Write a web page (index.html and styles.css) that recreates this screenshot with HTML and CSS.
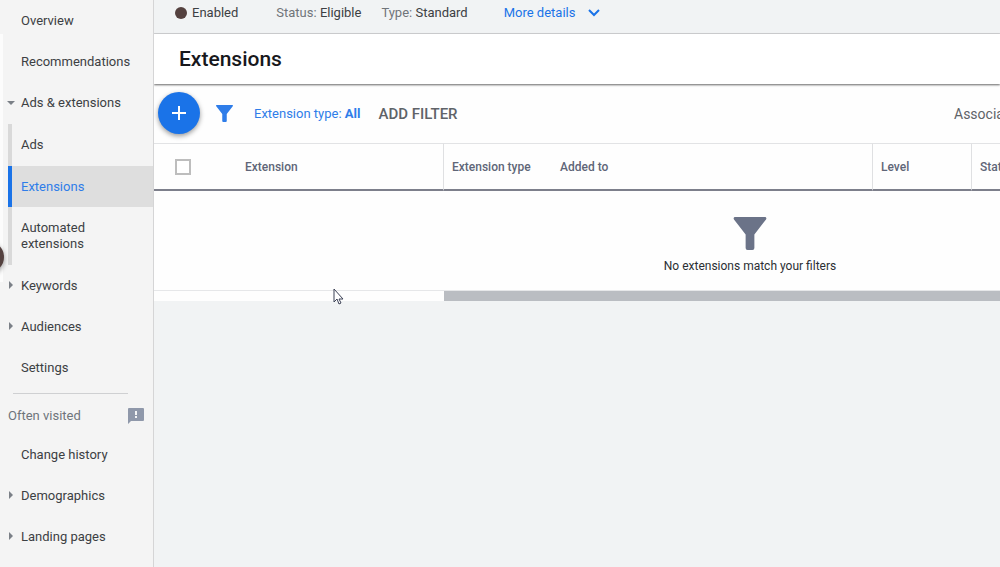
FILE: index.html
```html
<!DOCTYPE html>
<html lang="en">
<head>
<meta charset="utf-8">
<title>Extensions</title>
<link rel="stylesheet" href="styles.css">
</head>
<body>
<div class="app">
  <nav class="sidebar" aria-label="Campaign pages">
    <span class="rail"></span>
    <span class="rail-knob"></span>
    <a class="nav-item" href="#">Overview</a>
    <a class="nav-item" href="#">Recommendations</a>
    <a class="nav-item open" href="#">Ads &amp; extensions</a>
    <div class="subnav">
      <a class="nav-item" href="#">Ads</a>
      <a class="nav-item active" href="#" aria-current="page">Extensions</a>
      <a class="nav-item tall" href="#">Automated extensions</a>
    </div>
    <a class="nav-item closed" href="#">Keywords</a>
    <a class="nav-item closed" href="#">Audiences</a>
    <a class="nav-item" href="#">Settings</a>
    <hr class="divider">
    <div class="often">
      <span>Often visited</span>
      <svg class="feedback" viewBox="0 0 16 16" aria-hidden="true"><path fill="#8f98aa" d="M1 0h14q1 0 1 1v11q0 1-1 1H3l-3 3V1q0-1 1-1z"/><path fill="#f3f4f5" d="M7 3h2v4H7zM7 8h2v2H7z"/></svg>
    </div>
    <a class="nav-item" href="#">Change history</a>
    <a class="nav-item closed" href="#">Demographics</a>
    <a class="nav-item closed" href="#">Landing pages</a>
  </nav>
  <main class="main">
    <div class="status-bar">
      <span class="enabled"><span class="dot"></span>Enabled</span>
      <span class="status"><span class="muted">Status:</span> Eligible</span>
      <span class="type"><span class="muted">Type:</span> Standard</span>
      <button class="more" type="button">More details
        <svg class="chevron" viewBox="0 0 12 8" aria-hidden="true"><path d="M1 1l5 5 5-5" fill="none" stroke="#1a73e8" stroke-width="2"/></svg>
      </button>
    </div>
    <header class="heading"><h1>Extensions</h1></header>
    <div class="toolbar">
      <button class="fab" type="button" aria-label="Add extension">
        <svg viewBox="0 0 16 16" aria-hidden="true"><path d="M8 1v14M1 8h14" stroke="#fff" stroke-width="2"/></svg>
      </button>
      <svg class="funnel" viewBox="0 0 34 34" aria-hidden="true"><path fill="#2f7de9" d="M1 0h32q1.500 1 .5 2.500L21.500 18v14q0 2-2 2h-5q-2 0-2-2V18L.5 2.500Q-.5 1 1 0z"/></svg>
      <button class="chip" type="button">Extension type: <b>All</b></button>
      <button class="add-filter" type="button">ADD FILTER</button>
      <button class="association" type="button">Associa</button>
    </div>
    <div class="table-area">
      <table class="grid">
        <thead>
          <tr>
            <th class="col-check"><input type="checkbox" aria-label="Select all"></th>
            <th class="col-ext">Extension</th>
            <th class="col-type">Extension type</th>
            <th class="col-added">Added to</th>
            <th class="col-level">Level</th>
            <th class="col-status">Status</th>
          </tr>
        </thead>
        <tbody>
          <tr>
            <td colspan="6">
              <div class="empty">
                <svg class="funnel-large" viewBox="0 0 34 34" aria-hidden="true"><path fill="#6b7388" d="M1 0h32q1.500 1 .5 2.500L21.500 18v14q0 2-2 2h-5q-2 0-2-2V18L.5 2.500Q-.5 1 1 0z"/></svg>
                <span>No extensions match your filters</span>
              </div>
            </td>
          </tr>
        </tbody>
      </table>
      <div class="scroll-track"><div class="scroll-thumb"></div></div>
    </div>
  </main>
  <svg class="cursor" viewBox="0 0 11 17" aria-hidden="true"><path d="M1 1v13l3-3 2 5 2-1-2-4h4z" fill="#fff" stroke="#3d4256"/></svg>
</div>
</body>
</html>
```
FILE: styles.css
```css
* { box-sizing: border-box; }
body {
  margin: 0;
  background: #f1f3f4;
  color: #3c4043;
  font: 13px/16px Roboto, "Liberation Sans", sans-serif;
}
button { border: 0; padding: 0; background: none; font: inherit; color: inherit; white-space: nowrap; }
a { color: inherit; text-decoration: none; }
.app { position: relative; display: flex; height: 100vh; overflow: hidden; }

.sidebar {
  position: relative;
  flex: 0 0 154px;
  background: #f4f4f4;
  border-right: 1px solid #d5d5d6;
  overflow: hidden;
}
.rail { position: absolute; left: 0; top: 34px; width: 3px; height: 248px; background: #fcfcfc; }
.rail-knob {
  position: absolute; left: -28px; top: 241px; width: 32px; height: 32px;
  border-radius: 50%; background: #54413f; box-shadow: 0 2px 5px #0006;
}
.nav-item { position: relative; display: flex; align-items: center; height: 41px; padding-left: 21px; }
.open::before, .closed::before {
  content: ""; position: absolute; left: 9px;
  border: 4px solid transparent;
}
.open::before { left: 7px; top: 19px; border-top-color: #7b8087; }
.closed::before { top: 16px; border-left-color: #7b8087; }
.subnav {
  display: flex; flex-direction: column; gap: 1px;
  margin: 1px 0 0 8px; border-left: 4px solid #d9d9d9;
}
.subnav .nav-item { padding-left: 9px; }
.subnav .active { margin-left: -4px; padding-left: 9px; border-left: 4px solid #1a73e8; background: #dedede; color: #2f7de9; }
.subnav .tall { height: 57px; padding: 0 50px 2px 9px; }
.divider { margin: 5px 25px 0 13px; border: 0; border-top: 1px solid #cfd0d2; }
.often { display: flex; justify-content: space-between; align-items: center; height: 40px; padding: 3px 9px 0 8px; color: #6f747b; }
.feedback { width: 16px; height: 16px; }

.main { flex: 1; min-width: 0; overflow: hidden; }
.status-bar { display: flex; align-items: center; height: 34px; padding: 0 0 8px 21px; border-bottom: 1px solid #d3d4d6; }
.enabled { display: flex; align-items: center; gap: 5px; margin-right: 38px; }
.dot { width: 12px; height: 12px; border-radius: 50%; background: #54413f; }
.status { margin-right: 20px; }
.type { margin-right: 36px; }
.muted { color: #70757a; }
.more { display: flex; align-items: center; gap: 13px; color: #1a73e8; }
.chevron { width: 12px; height: 8px; }

.heading { position: relative; height: 50px; padding: 13px 25px; background: #fff; box-shadow: 0 1px 2px #0009; }
.heading h1 { margin: 0; font-size: 21px; line-height: 24px; font-weight: 500; color: #17181c; }

.toolbar { display: flex; align-items: center; height: 59px; padding: 0 0 2px 4px; background: #fefefe; overflow: hidden; }
.fab { display: grid; place-items: center; flex: none; width: 42px; height: 42px; margin-right: 16px; border-radius: 50%; background: #1a73e8; box-shadow: 0 2px 5px #0006; }
.fab svg { width: 16px; height: 16px; }
.funnel { flex: none; width: 17px; height: 17px; margin: 2px 21px 0 0; }
.chip { margin-right: 18px; color: #2f7de9; }
.chip b { font-weight: 700; }
.add-filter { font-size: 15px; font-weight: 500; color: #5f6368; }
.association { flex: 0 0 46px; min-width: 0; margin-left: auto; text-align: left; font-size: 14px; color: #5f6368; }
.chip, .add-filter, .association { padding-top: 2px; }

.table-area { overflow: hidden; background: #fefefe; }
.grid { width: 1192px; table-layout: fixed; border-collapse: separate; border-spacing: 0; }
.grid th {
  height: 48px; padding: 0 8px; text-align: left;
  font-size: 12px; font-weight: 500; color: #5f6678;
  border-top: 1px solid #e2e3e5; border-bottom: 2px solid #7d7f8b;
}
.grid .col-check { width: 83px; padding-left: 21px; }
.grid .col-ext { width: 207px; }
.grid .col-type { width: 108px; white-space: nowrap; }
.grid .col-added { width: 321px; }
.grid .col-level { width: 99px; }
.grid .col-ext, .grid .col-added, .grid .col-level { border-right: 1px solid #dfe0e2; }
.grid input { display: block; appearance: none; width: 16px; height: 16px; margin: 0; border: 2px solid #bdbdbd; background: #fff; }
.grid td { padding: 0; border-bottom: 1px solid #e6e7e9; }
.empty { display: flex; flex-direction: column; align-items: center; gap: 8px; height: 99px; padding-top: 26px; font-size: 12px; color: #2b2e33; }
.funnel-large { width: 34px; height: 33px; }
.scroll-track { height: 10px; padding-left: 290px; }
.scroll-thumb { height: 10px; background: #babdc2; }
.cursor { position: absolute; left: 333px; top: 288px; width: 11px; height: 17px; }
```
